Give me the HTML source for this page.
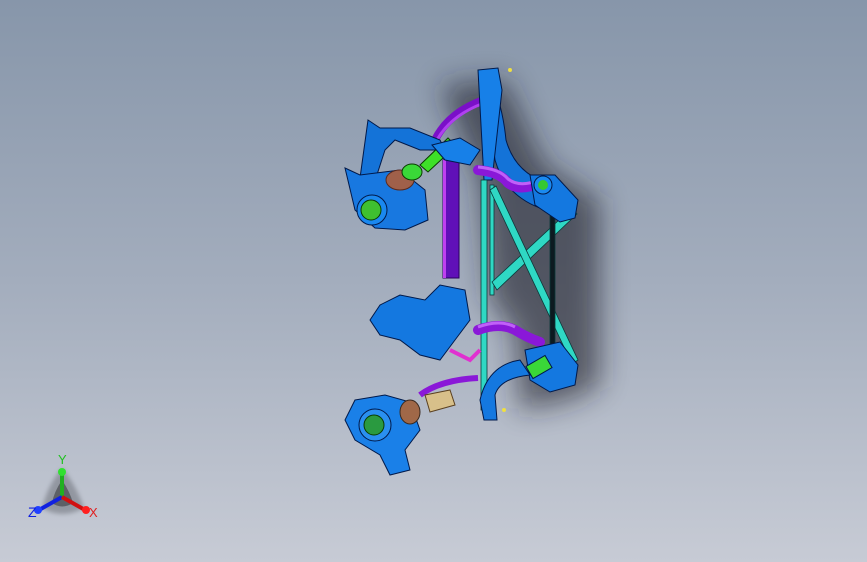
<!DOCTYPE html>
<html><head><meta charset="utf-8"><style>
html,body{margin:0;padding:0;}
body{width:867px;height:562px;overflow:hidden;background:linear-gradient(#8796aa 0%,#a3adbd 50%,#c7cbd5 100%);}
svg{display:block}
text{font-family:"Liberation Sans",sans-serif;}
</style></head><body>
<svg width="867" height="562" viewBox="0 0 867 562" xmlns="http://www.w3.org/2000/svg">
<defs>
<filter id="bl" x="-50%" y="-50%" width="200%" height="200%"><feGaussianBlur stdDeviation="14"/></filter>
<filter id="bl2"><feGaussianBlur stdDeviation="2"/></filter>
</defs>
<g filter="url(#bl)" fill="#1c1f26" opacity="0.6">
<path d="M440 85 L505 80 L545 165 L600 200 L600 385 L570 400 L520 410 L515 330 L490 300 L480 180 Z"/>
</g>
<path d="M435 140 Q450 110 490 98" stroke="#7a10c8" stroke-width="8" fill="none"/>
<path d="M437 140 Q452 113 490 101" stroke="#b040f0" stroke-width="3" fill="none"/>
<path d="M488 75 Q502 100 506 140 Q515 172 545 182 L555 198 L540 208 Q505 195 495 160 Q490 120 480 90 Z" fill="#1473d8" stroke="#00194a" stroke-width="1"/>
<path d="M478 70 L498 68 L502 90 L492 180 L484 180 Z" fill="#1780e8" stroke="#00194a" stroke-width="1"/>
<rect x="443" y="160" width="16" height="118" fill="#6010b8" stroke="#2a0060" stroke-width="1"/>
<rect x="443" y="160" width="3" height="118" fill="#c040f0"/>
<g stroke="#0a3a3a" stroke-width="0.8" fill="#2fd8c4">
<rect x="481" y="180" width="6" height="230"/>
<rect x="490" y="185" width="4" height="110"/>
<path d="M492 282 L572 208 L577 214 L497 290 Z"/>
<path d="M490 190 L496 186 L578 360 L572 364 Z"/>
<rect x="550" y="215" width="5" height="140" fill="#0c1a20"/>
</g>
<path d="M478 170 Q500 172 508 183 Q520 192 540 183" stroke="#8a18d8" stroke-width="10" fill="none" stroke-linecap="round"/>
<path d="M478 167 Q500 169 508 179 Q520 188 538 180" stroke="#c060f8" stroke-width="3" fill="none"/>
<path d="M478 330 Q500 322 515 330 Q528 338 540 342" stroke="#8a18d8" stroke-width="10" fill="none" stroke-linecap="round"/>
<path d="M478 327 Q500 319 515 327" stroke="#c060f8" stroke-width="3" fill="none"/>
<path d="M530 175 L555 175 L578 200 L575 218 L560 222 L535 205 Z" fill="#1478e0" stroke="#00194a"/>
<circle cx="543" cy="185" r="9" fill="#1a8af0" stroke="#00194a"/>
<circle cx="543" cy="185" r="5" fill="#35c830"/>
<path d="M525 350 L560 342 L578 365 L575 385 L550 392 L530 380 Z" fill="#1478e0" stroke="#00194a"/>
<rect x="528" y="360" width="22" height="14" fill="#3ad838" stroke="#00194a" transform="rotate(-30 539 367)"/>
<path d="M480 400 Q488 365 520 360 L530 375 Q500 378 495 395 L497 420 L484 420 Z" fill="#1478e0" stroke="#00194a"/>
<path d="M368 120 L380 128 L410 128 L440 140 L445 150 L420 150 L395 140 L385 150 L372 190 L360 178 Z" fill="#1473d8" stroke="#00194a"/>
<path d="M420 165 L448 138 L456 146 L428 172 Z" fill="#3ee028" stroke="#0a3a00"/>
<path d="M432 145 L460 138 L480 150 L470 165 L445 160 Z" fill="#1780e8" stroke="#00194a"/>
<path d="M345 168 L360 175 L400 170 L425 190 L428 220 L405 230 L375 228 L355 210 Z" fill="#1878e0" stroke="#00194a"/>
<ellipse cx="400" cy="180" rx="14" ry="10" fill="#a0604a" stroke="#5a2a20"/>
<ellipse cx="412" cy="172" rx="10" ry="8" fill="#3ad838" stroke="#0a3a00"/>
<circle cx="372" cy="210" r="15" fill="#1a88f0" stroke="#00194a"/>
<circle cx="371" cy="210" r="10" fill="#3fc030" stroke="#0a3a00"/>
<path d="M370 320 L380 305 L400 295 L425 300 L440 285 L465 290 L470 320 L455 340 L440 360 L420 355 L400 340 L380 335 Z" fill="#1478e0" stroke="#00194a"/>
<path d="M450 350 L470 360 L480 350" stroke="#e030d0" stroke-width="4" fill="none"/>
<path d="M420 395 Q440 380 478 378" stroke="#8a18d8" stroke-width="6" fill="none"/>
<path d="M425 395 L450 390 L455 405 L430 412 Z" fill="#d8c08a" stroke="#5a4020"/>
<path d="M355 400 L385 395 L410 402 L420 430 L405 450 L410 470 L390 475 L380 455 L355 440 L345 420 Z" fill="#1a80e8" stroke="#00194a"/>
<ellipse cx="410" cy="412" rx="10" ry="12" fill="#a06848" stroke="#3a2a20"/>
<circle cx="375" cy="425" r="16" fill="#2a90f0" stroke="#00194a"/>
<circle cx="374" cy="425" r="10" fill="#2a9a40" stroke="#0a3a00"/>
<circle cx="510" cy="70" r="2" fill="#f0e040"/><circle cx="504" cy="410" r="2" fill="#f0e040"/>
<path d="M62 468 Q48 485 42 508 Q62 520 84 508 Q76 485 62 468 Z" fill="#6e727a" opacity="0.55" filter="url(#bl2)"/>
<path d="M62 480 Q54 492 52 503 Q62 510 73 503 Q70 492 62 480 Z" fill="#3a3c40" opacity="0.6"/>
<line x1="62" y1="497" x2="62" y2="473" stroke="#20b020" stroke-width="4"/>
<circle cx="62" cy="472" r="4" fill="#30e030"/>
<line x1="62" y1="497" x2="39" y2="510" stroke="#1020e0" stroke-width="4"/>
<circle cx="38" cy="510" r="4" fill="#2040ff"/>
<line x1="62" y1="497" x2="85" y2="510" stroke="#d01010" stroke-width="4"/>
<circle cx="86" cy="510" r="4" fill="#ff2020"/>
<text x="58" y="464" font-size="13" fill="#20c020">Y</text>
<text x="28" y="517" font-size="14" fill="#1020e0">Z</text>
<text x="89" y="517" font-size="13" fill="#e02020">X</text>
</svg>
</body></html>
